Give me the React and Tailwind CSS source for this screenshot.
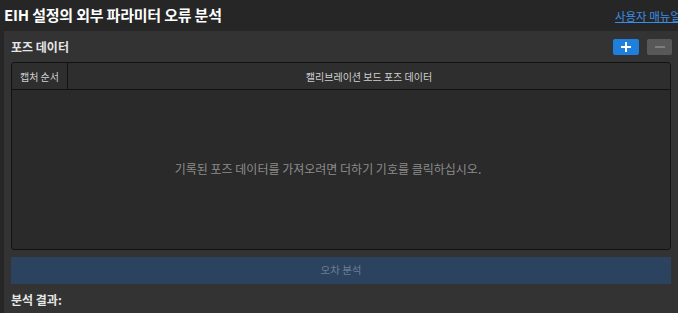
export default function App() {
  return (
    <div
      className="w-[678px] h-[313px] overflow-hidden bg-[#262626] text-[#e0e0e0] flex flex-col"
      style={{ fontFamily: '"Noto Sans CJK KR", "Noto Sans", sans-serif' }}
    >
      <div className="h-[31px] flex items-center justify-between pl-[4px] shrink-0">
        <div className="text-[15px] font-bold text-white tracking-[-0.2px]">EIH 설정의 외부 파라미터 오류 분석</div>
        <a className="text-[11.5px] text-[#3a8ee6] underline whitespace-nowrap mr-[-3px] mt-[2px]">사용자 매뉴얼</a>
      </div>
      <div className="flex-1 ml-[4px] bg-[#333333] pl-[7px] pr-[7px] flex flex-col">
        <div className="h-[31px] flex items-center justify-between">
          <div className="text-[12px] font-semibold text-[#e6e6e6]">포즈 데이터</div>
          <div className="flex gap-[8px] mr-[-1px]">
            <button className="w-[26px] h-[16px] rounded-[2px] bg-[#1f7fdc] flex items-center justify-center">
              <svg width="12" height="12" viewBox="0 0 12 12">
                <path d="M6 1v10M1 6h10" stroke="white" strokeWidth="2" />
              </svg>
            </button>
            <button className="w-[25px] h-[16px] rounded-[2px] bg-[#585858] flex items-center justify-center">
              <svg width="12" height="12" viewBox="0 0 12 12">
                <path d="M1 6h10" stroke="#8a8a8a" strokeWidth="1.5" />
              </svg>
            </button>
          </div>
        </div>
        <div className="h-[188px] border border-[#121212] rounded-[3px] bg-[#2a2a2a] flex flex-col overflow-hidden">
          <div className="h-[27px] flex border-b border-[#121212] bg-[#2e2e2e] text-[10px] text-[#d0d0d0]">
            <div className="w-[56px] border-r border-[#121212] flex items-center justify-center">캡처 순서</div>
            <div className="flex-1 flex items-center justify-center">캘리브레이션 보드 포즈 데이터</div>
          </div>
          <div className="flex-1 flex items-center justify-center text-[12px] text-[#8c8c8c] pb-[2px] pr-[26px]">
            기록된 포즈 데이터를 가져오려면 더하기 기호를 클릭하십시오.
          </div>
        </div>
        <button className="mt-[7px] h-[27px] bg-[#2c4360] text-[10.5px] text-[#6d7e92] flex items-center justify-center pb-[2px]">
          오차 분석
        </button>
        <div className="mt-[7px] text-[12px] font-semibold text-[#e6e6e6]">분석 결과:</div>
      </div>
    </div>
  );
}
